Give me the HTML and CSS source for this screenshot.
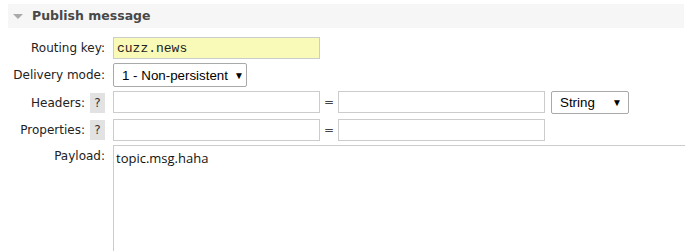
FILE: index.html
```html
<!DOCTYPE html>
<html lang="en">
<head>
  <meta charset="UTF-8">
  <title>Publish message</title>
  <link rel="stylesheet" href="styles.css">
</head>
<body>
  <div class="section">
    <h2 class="section-title"><span class="arrow"></span>Publish message</h2>
    <form class="publish">
      <label class="label">Routing key:</label>
      <div class="control">
        <input class="text routing" type="text" value="cuzz.news">
      </div>

      <label class="label">Delivery mode:</label>
      <div class="control">
        <div class="select mode">1 - Non-persistent <span class="caret">&#9660;</span></div>
      </div>

      <label class="label">Headers: <span class="help">?</span></label>
      <div class="control pair">
        <input class="text" type="text">
        <span class="eq">=</span>
        <input class="text" type="text">
        <div class="select type">String <span class="caret">&#9660;</span></div>
      </div>

      <label class="label">Properties: <span class="help">?</span></label>
      <div class="control pair">
        <input class="text" type="text">
        <span class="eq">=</span>
        <input class="text" type="text">
      </div>

      <label class="label top">Payload:</label>
      <div class="control">
        <textarea class="payload">topic.msg.haha</textarea>
      </div>
    </form>
  </div>
</body>
</html>
```

FILE: styles.css
```css
*{
  margin: 0;
  padding: 0;
  box-sizing: border-box;
}
html, body{
  overflow: hidden;
}
body{
  font: 12px "DejaVu Sans", Verdana, sans-serif;
  color: #222;
  background: #fff;
}
.section{
  padding: 4px 1px 0 8px;
}
.section-title{
  height: 24px;
  line-height: 24px;
  background: #f6f6f6;
  color: #484848;
  font-size: 12.5px;
  font-weight: bold;
  display: flex;
  align-items: center;
}
.arrow{
  display: inline-block;
  width: 0;
  height: 0;
  border-left: 5.5px solid transparent;
  border-right: 5.5px solid transparent;
  border-top: 5px solid #aaa;
  margin: 1px 9px 0 5px;
}
.publish{
  display: grid;
  grid-template-columns: 97px 1fr;
  grid-template-rows: 22px 24px 24px 22px auto;
  column-gap: 8px;
  row-gap: 4px;
  margin-top: 9px;
}
.label{
  display: flex;
  align-items: center;
  justify-content: flex-end;
  gap: 5px;
  white-space: nowrap;
}
.label.top{
  align-items: flex-start;
  padding-top: 4px;
}
.control{
  display: flex;
  align-items: flex-start;
}
.text{
  width: 207px;
  height: 22px;
  border: 1px solid #ccc;
  background: #fff;
  outline: none;
}
.routing{
  background: #fafab8;
  font: 13px "Liberation Mono", monospace;
  color: #222;
  padding: 0 3px;
}
.help{
  display: inline-block;
  width: 15px;
  height: 20px;
  line-height: 20px;
  text-align: center;
  background: #e2e2e2;
  color: #333;
}
.eq{
  width: 18px;
  text-align: center;
  line-height: 22px;
  color: #444;
}
.select{
  height: 24px;
  border: 1px solid #a9a9a9;
  border-radius: 2px;
  background: #fff;
  font: 13.33px "Liberation Sans", Arial, sans-serif;
  color: #000;
  white-space: nowrap;
  display: flex;
  align-items: center;
  justify-content: space-between;
  padding: 0 6px 0 8px;
}
.mode{
  width: 134px;
}
.type{
  width: 78px;
  height: 23px;
  margin-left: 6px;
}
.caret{
  font-size: 10px;
  margin-left: 6px;
}
.payload{
  width: 572px;
  height: 106px;
  border: 1px solid #ccc;
  border-right: none;
  border-bottom: none;
  resize: none;
  outline: none;
  font: 13px "Open Sans", "Noto Sans", sans-serif;
  color: #111;
  padding: 3px 2px;
}
```
